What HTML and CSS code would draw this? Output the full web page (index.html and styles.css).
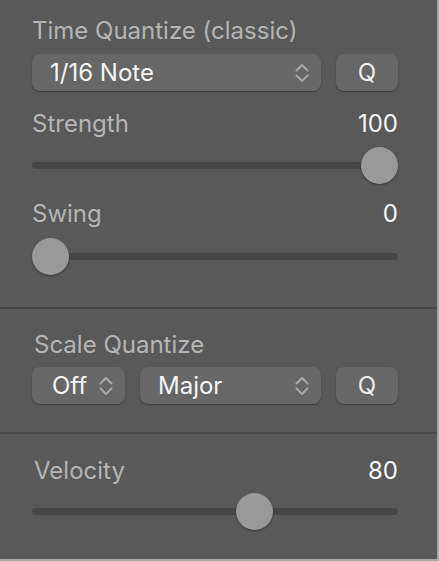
FILE: index.html
```html
<!DOCTYPE html>
<html>
<head>
<meta charset="utf-8">
<link rel="stylesheet" href="styles.css">
</head>
<body>
<div class="panel">
  <section class="sec sec-time">
    <div class="title">Time Quantize (classic)</div>
    <div class="ctrl-row">
      <div class="popup popup-wide"><span class="popup-text">1/16 Note</span>
        <svg class="chev" viewBox="0 0 14 20" width="14" height="20"><polyline points="1.5,7.5 7,2 12.5,7.5"/><polyline points="1.5,12.5 7,18 12.5,12.5"/></svg>
      </div>
      <div class="btn">Q</div>
    </div>
    <div class="param-row param-first">
      <span class="label">Strength</span><span class="value">100</span>
    </div>
    <div class="slider"><div class="track"></div><div class="knob" style="left: calc((100% - 37px) * 1)"></div></div>
    <div class="param-row param-second">
      <span class="label">Swing</span><span class="value">0</span>
    </div>
    <div class="slider"><div class="track"></div><div class="knob" style="left: calc((100% - 37px) * 0)"></div></div>
  </section>
  <section class="sec sec-scale">
    <div class="title title-indent">Scale Quantize</div>
    <div class="ctrl-row">
      <div class="popup popup-small"><span class="popup-text">Off</span>
        <svg class="chev" viewBox="0 0 14 20" width="14" height="20"><polyline points="1.5,7.5 7,2 12.5,7.5"/><polyline points="1.5,12.5 7,18 12.5,12.5"/></svg>
      </div>
      <div class="popup popup-wide"><span class="popup-text">Major</span>
        <svg class="chev" viewBox="0 0 14 20" width="14" height="20"><polyline points="1.5,7.5 7,2 12.5,7.5"/><polyline points="1.5,12.5 7,18 12.5,12.5"/></svg>
      </div>
      <div class="btn">Q</div>
    </div>
  </section>
  <section class="sec sec-vel">
    <div class="param-row">
      <span class="label title-indent">Velocity</span><span class="value">80</span>
    </div>
    <div class="slider"><div class="track"></div><div class="knob" style="left: calc((100% - 37px) * 0.62)"></div></div>
  </section>
</div>
</body>
</html>
```

FILE: styles.css
```css
* { box-sizing: border-box; }
html, body { margin: 0; padding: 0; background: #595959; }
body {
  font-family: Inter, "Open Sans", "Liberation Sans", sans-serif;
  font-size: 24px;
  font-weight: 400;
  color: #b3b3b3;
}
.panel {
  width: 439px;
  height: 561px;
  border-right: 2px solid #a6a6a6;
  border-bottom: 2px solid #a6a6a6;
  background: #595959;
  overflow: hidden;
}
.sec {
  padding-left: 32px;
  padding-right: 39px;
  border-bottom: 2px solid #464646;
}
.sec-time { padding-top: 18px; padding-bottom: 32px; }
.sec-scale { padding-top: 23px; padding-bottom: 28px; }
.sec-vel { padding-top: 24px; border-bottom: none; }
.title, .label {
  line-height: 26px;
  color: #b5b5b5;
}
.title-indent { padding-left: 2px; }
.ctrl-row {
  display: flex;
  gap: 15px;
  margin-top: 10px;
  height: 37px;
}
.sec-scale .ctrl-row { margin-top: 9px; }
.popup {
  display: flex;
  align-items: center;
  justify-content: space-between;
  height: 37px;
  padding: 0 12px 0 18px;
  background: #676767;
  border-radius: 8px;
  box-shadow: 0 1px 1.5px rgba(0,0,0,0.35);
}
.popup-wide { flex: 1; }
.popup-small { width: 93px; flex: none; padding-left: 20px; }
.popup-text { color: #f5f5f5; line-height: 26px; }
.chev { display: block; }
.chev polyline {
  fill: none;
  stroke: #a9a9a9;
  stroke-width: 2;
  stroke-linecap: round;
  stroke-linejoin: round;
}
.btn {
  width: 62px;
  flex: none;
  height: 37px;
  display: flex;
  align-items: center;
  justify-content: center;
  background: #676767;
  border-radius: 8px;
  box-shadow: 0 1px 1.5px rgba(0,0,0,0.35);
  color: #eeeeee;
}
.param-row {
  display: flex;
  justify-content: space-between;
  line-height: 26px;
}
.param-first { margin-top: 20px; }
.param-second { margin-top: 17px; }
.value { color: #f5f5f5; }
.slider {
  position: relative;
  height: 37px;
  margin-top: 10px;
  display: flex;
  align-items: center;
}
.param-second + .slider { margin-top: 11px; }
.sec-vel .slider { margin-top: 9px; }
.track {
  width: 100%;
  height: 7px;
  border-radius: 4px;
  background: #464646;
}
.knob {
  position: absolute;
  top: 0;
  width: 37px;
  height: 37px;
  border-radius: 50%;
  background: #999999;
  box-shadow: 0 1px 2px rgba(0,0,0,0.4);
}
```
